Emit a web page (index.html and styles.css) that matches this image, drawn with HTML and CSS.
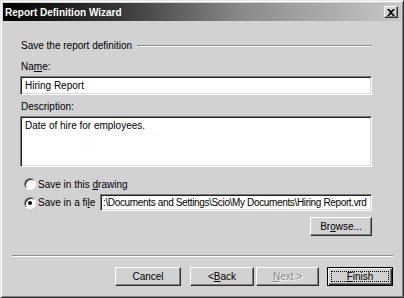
FILE: index.html
```html
<!DOCTYPE html>
<html lang="en">
<head>
    <meta charset="UTF-8">
    <title>Report Definition Wizard</title>
    <link rel="stylesheet" href="styles.css">
</head>
<body>

    <div class="window">
        <div class="titlebar">
            <span class="title">Report Definition Wizard</span>
            <span class="close">
                <svg width="8" height="7" viewBox="0 0 8 7"><path d="M0 0h2l2 2 2-2h2L5 3.5 8 7H6L4 5 2 7H0l3-3.5z" fill="#000"/></svg>
            </span>
        </div>

        <div class="content">
            <div class="group-head">
                <span>Save the report definition</span>
                <span class="etch"></span>
            </div>

            <label class="lbl lbl-name">Na<u>m</u>e:</label>
            <div class="field">Hiring Report</div>

            <label class="lbl lbl-desc">Description:</label>
            <div class="field area">Date of hire for employees.</div>

            <div class="radio-row r1">
                <span class="radio"></span>
                <span>Save in this <u>d</u>rawing</span>
            </div>
            <div class="radio-row r2">
                <span class="radio on"></span>
                <span class="radio-text">Save in a fi<u>l</u>e</span>
                <div class="field path">:\Documents and Settings\Scio\My Documents\Hiring Report.vrd</div>
            </div>

            <div class="browse-row">
                <button class="btn browse">Br<u>o</u>wse...</button>
            </div>
        </div>

        <div class="footer">
            <div class="etch wide"></div>
            <div class="buttons">
                <button class="btn cancel">Cancel</button>
                <button class="btn back">&lt; <u>B</u>ack</button>
                <button class="btn disabled"><u>N</u>ext &gt;</button>
                <button class="btn default"><span class="focus"><u>F</u>inish</span></button>
            </div>
        </div>
    </div>

</body>
</html>
```

FILE: styles.css
```css
body { margin: 0; background: #d4d4d4; font-family: "Liberation Sans", Arial, sans-serif; font-size: 10px; color: #000; }
u { text-decoration: underline; text-underline-offset: 1px; }

.window {
    width: 404px; height: 298px; box-sizing: border-box;
    background: #d2d2d2;
    border: 1px solid; border-color: #e6e6e6 #303030 #303030 #e6e6e6;
    box-shadow: inset 1px 1px #fff, inset -1px -1px #808080;
    padding: 2px;
    display: flex; flex-direction: column;
}

.titlebar {
    height: 18px; display: flex; align-items: center; justify-content: space-between;
    padding: 0 3px 0 2px;
    background: linear-gradient(to right, #000 0%, #3a3a3a 30%, #8a8a8a 60%, #c8c8c8 100%);
}
.title { color: #fff; font-weight: bold; font-size: 10px; }
.close {
    width: 14px; height: 12px; box-sizing: border-box; background: #d2d2d2;
    display: flex; align-items: center; justify-content: center;
    border: 1px solid; border-color: #fff #303030 #303030 #fff;
    box-shadow: inset -1px -1px #808080;
}

.content { padding: 0 29px 0 17px; display: flex; flex-direction: column; }

.group-head { display: flex; align-items: center; margin-top: 18px; height: 13px; }
.group-head span:first-child { padding: 0 5px 0 1px; }
.etch { flex: 1; height: 0; border-top: 1px solid #8c8c8c; border-bottom: 1px solid #fff; }

.lbl { display: block; height: 13px; padding-left: 1px; }
.lbl-name { margin-top: 9px; }
.lbl-desc { margin-top: 6px; }

.field {
    background: #fff; box-sizing: border-box; height: 19px;
    border: 1px solid; border-color: #7c7c7c #fff #fff #7c7c7c;
    box-shadow: inset 1px 1px #202020, inset -1px -1px #d8d8d8;
    padding: 3px 4px 0; white-space: nowrap; overflow: hidden;
    margin-top: 2px;
}
.area { height: 51px; margin-top: 2px; }

.radio-row { display: flex; align-items: center; padding-left: 4px; }
.r1 { margin-top: 10px; height: 14px; }
.r2 { margin-top: 3px; height: 17px; }
.radio {
    width: 12px; height: 12px; box-sizing: border-box; border-radius: 50%; background: #fff;
    border: 1px solid; border-color: #7c7c7c #fff #fff #7c7c7c;
    box-shadow: inset 1px 1px #202020;
    margin-right: 2px; position: relative; flex: none;
}
.radio.on::after {
    content: ""; position: absolute; left: 3px; top: 3px; width: 4px; height: 4px;
    border-radius: 50%; background: #000;
}
.radio-text { width: 62px; flex: none; white-space: nowrap; }
.path { flex: 1; margin-top: 0; height: 17px; padding: 2px 2px 0; letter-spacing: -0.35px; }

.browse-row { display: flex; justify-content: flex-end; margin-top: 6px; }

.btn {
    font-family: inherit; font-size: 10px; color: #000;
    height: 19px; box-sizing: border-box; background: #d2d2d2; padding: 0;
    border: 1px solid; border-color: #fff #303030 #303030 #fff;
    box-shadow: inset -1px -1px #808080;
    display: flex; align-items: center; justify-content: center;
}
.browse { width: 62px; }

.footer { margin-top: auto; padding: 0 8px 9px 9px; }
.wide { margin-bottom: 10px; }
.buttons { display: flex; justify-content: flex-end; }
.buttons .cancel { width: 66px; margin-right: 9px; }
.buttons .back { width: 64px; margin-right: 2px; }
.buttons .disabled { width: 63px; color: #888; text-shadow: 1px 1px #fff; margin-right: 8px; }
.buttons .default {
    width: 66px;
    border: 1px solid #000;
    box-shadow: inset 1px 1px #fff, inset -1px -1px #303030, inset -2px -2px #808080;
    padding: 3px;
}
.focus {
    flex: 1; align-self: stretch; display: flex; align-items: center; justify-content: center;
    border: 1px dotted #000;
}
```
